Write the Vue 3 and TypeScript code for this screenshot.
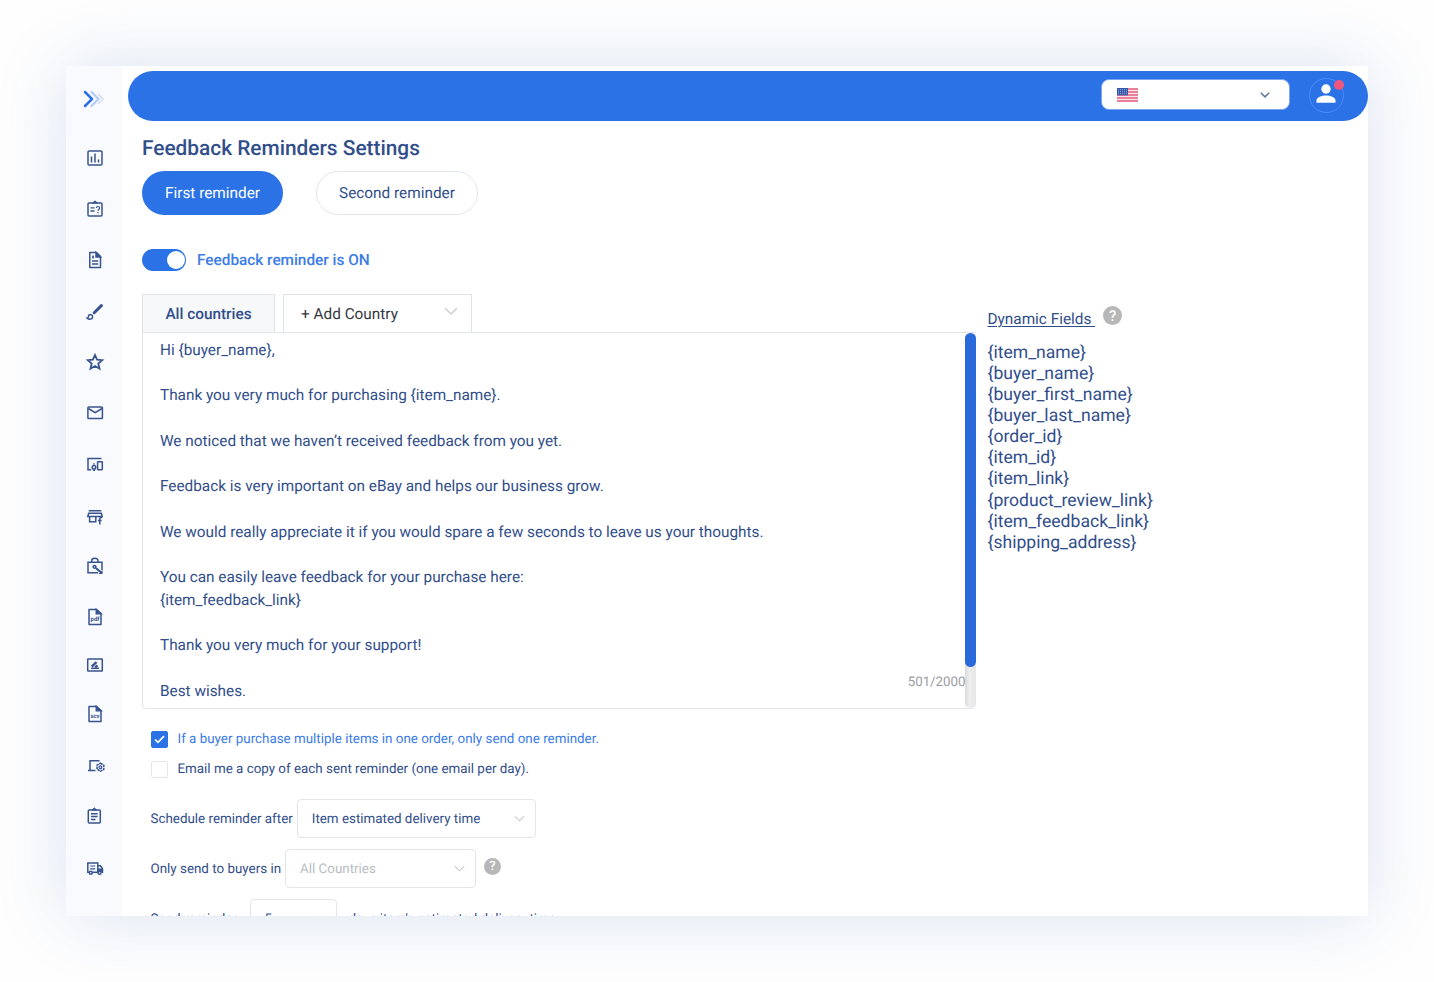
<script setup lang="ts">
import { computed, ref } from 'vue'

const icons = [
  'chart', 'quiz', 'doc', 'brush', 'star', 'mail', 'devices', 'store', 'bag',
  'pdf', 'sign', 'csv', 'laptop', 'tasks', 'truck',
]
const fields = [
  '{item_name}', '{buyer_name}', '{buyer_first_name}', '{buyer_last_name}', '{order_id}',
  '{item_id}', '{item_link}', '{product_review_link}', '{item_feedback_link}', '{shipping_address}',
]
const message = ref(`Hi {buyer_name},

Thank you very much for purchasing {item_name}.

We noticed that we haven’t received feedback from you yet.

Feedback is very important on eBay and helps our business grow.

We would really appreciate it if you would spare a few seconds to leave us your thoughts.

You can easily leave feedback for your purchase here:
{item_feedback_link}

Thank you very much for your support!

Best wishes.`)
const lines = computed(() => message.value.split('\n'))
</script>

<template>
  <div class="stage">
    <div class="window">
      <aside class="sidebar">
        <svg class="expand" viewBox="0 0 22 18" fill="none" stroke-linecap="round" stroke-linejoin="round">
          <path d="M15.500 4.500 20 9l-4.500 4.500" stroke="#d3def2" stroke-width="1.600" />
          <path d="M8.500 2l7 7-7 7" stroke="#b5ccf5" stroke-width="2.200" />
          <path d="M2 2l7 7-7 7" stroke="#2b70e4" stroke-width="2.500" />
        </svg>
        <nav class="nav">
          <a v-for="name in icons" :key="name" class="nav-item">
            <svg class="ico" :class="name" viewBox="0 0 18 18" fill="none" stroke="currentColor" stroke-width="1.500">
              <template v-if="name === 'chart'">
                <rect x="2" y="2" width="14" height="14" rx="1" />
                <path d="M5.500 7.500v6M9 4.500v9M12.500 10.500v3" />
              </template>
              <template v-else-if="name === 'quiz'">
                <rect x="2" y="3" width="14" height="13" rx="1" />
                <path d="M6.500 3 9 .9 11.500 3z" fill="currentColor" stroke-width="1" />
                <path d="M4.500 7.800h4M4.500 11h4" stroke-width="1.300" />
                <path d="M10.400 8c0-2 3.200-2 3.200 0 0 1.300-1.600 1.200-1.600 2.700M12 12v1.200" stroke-width="1.200" />
              </template>
              <template v-else-if="name === 'doc'">
                <path d="M3.800 1.500h6.700l4 4v11H3.800z" stroke-linejoin="round" />
                <path d="M10 1.500v4.500h4.500z" fill="currentColor" />
                <path d="M6 10h6.200M6 13h6.200M6 6.200h2M7 4.600v3" stroke-width="1.300" />
              </template>
              <template v-else-if="name === 'brush'">
                <path d="M8.200 9.700 15.400 2.600" stroke-width="3" stroke-linecap="round" />
                <path d="M1.200 15.200c1.300 0 1.100-1 1.300-2.100.4-2.200 4.200-1.900 4.200.6 0 2.600-3.700 3.300-5.500 1.500z" />
              </template>
              <path v-else-if="name === 'star'" d="M9 2l2.100 4.700 5.100.5-3.900 3.400 1.200 5.100L9 13l-4.500 2.700 1.200-5.100-3.900-3.400 5.100-.5z" stroke-width="1.800" />
              <template v-else-if="name === 'mail'">
                <rect x="1.900" y="3" width="14.500" height="11.500" rx=".8" />
                <path d="M2.400 4.500l6.800 4.200 6.800-4.200" />
              </template>
              <template v-else-if="name === 'devices'">
                <path d="M15.500 3.500H2v11.200h3.200" />
                <rect x="11.600" y="6.700" width="4.700" height="8" rx=".4" />
                <circle cx="8" cy="12.300" r="1.800" />
                <path d="M7 9h2M7 15.300h2" stroke-width="1.200" />
              </template>
              <template v-else-if="name === 'store'">
                <path d="M2.700 2.700h12.600M2.700 5.300h12.600l.9 3.200H1.800zM3.600 8.500v5.200h6.200V8.500" />
                <path d="M16 9.500c-1.800-.4-2.200.3-2.200 1.500v5.500M12 12.500h3.600" stroke-width="1.500" />
              </template>
              <template v-else-if="name === 'bag'">
                <path d="M16 13V5.200H2v10.600h10M5.700 5V3.700C5.700.4 12 .4 12 3.700V5" />
                <circle cx="8.500" cy="9.800" r="1.400" />
                <path d="M9.800 11l6 5" stroke-width="2.200" />
                <path d="M16.500 13v4h-4z" fill="currentColor" stroke="none" />
              </template>
              <template v-else-if="name === 'pdf' || name === 'csv'">
                <path d="M3 1.500h7.500l4.500 4v11H3z" stroke-linejoin="round" />
                <path d="M10.300 1.500v4.200H15z" fill="currentColor" />
                <text x="9" y="13" text-anchor="middle" class="glyph">{{ name === 'pdf' ? 'pdf' : 'scv' }}</text>
              </template>
              <template v-else-if="name === 'sign'">
                <rect x="1.700" y="3" width="14.600" height="12" rx=".6" />
                <path d="M5 12.300h8" />
                <path d="M5.800 10.700 10.500 6M9.200 11.500l2.200-2.200" stroke-width="2.400" />
              </template>
              <template v-else-if="name === 'laptop'">
                <path d="M13.500 3.800H4v9.700M2 13.600h7.500" />
                <path d="M14.400 6.200l3.400 2v4l-3.400 2-3.400-2v-4z" stroke-width="1.500" stroke-dasharray="2.600 .6" />
                <circle cx="14.400" cy="10.200" r="1.400" stroke-width="1.200" />
              </template>
              <template v-else-if="name === 'tasks'">
                <rect x="2.300" y="3" width="12" height="13" rx="1" />
                <path d="M6 3 8.300.9 10.600 3z" fill="currentColor" stroke-width="1" />
                <path d="M5 6.800h6.600M5 9.600h6.600M5 12.400h4.500" />
              </template>
              <template v-else>
                <path d="M3 13.200H1.800V4h10v9.200H6.500M11.800 6.800h2.500l2.200 3v3.400h-.7" />
                <path d="M12 10h4.500v2.500H12z" fill="currentColor" stroke-width="1" />
                <path d="M4.200 7h5M4.200 9.800h5" stroke-width="1.200" />
                <circle cx="4.800" cy="13.800" r="1.500" />
                <circle cx="13.600" cy="13.800" r="1.500" />
              </template>
            </svg>
          </a>
        </nav>
      </aside>

      <main class="main">
        <header class="topbar">
          <div class="locale">
            <svg class="flag" viewBox="0 0 21 14">
              <rect width="21" height="14" fill="#fbe3ea" />
              <path d="M0 1h21M0 4h21M0 7h21M0 10h21M0 13h21" stroke="#e55f83" stroke-width="1.500" />
              <rect width="11" height="7.300" fill="#3558a8" />
              <path d="M1 1.700h10M1 3.700h10M1 5.700h10" stroke="#a9bbe0" stroke-width=".8" stroke-dasharray="1 1" />
            </svg>
            <svg class="chev-dark" viewBox="0 0 10 6"><path d="M.8.8 5 4.900 9.200.8" /></svg>
          </div>
          <div class="avatar">
            <svg viewBox="0 0 20 20"><circle cx="10" cy="5" r="4.700" /><path d="M.5 18.700v-2.200C.5 13 6 11.500 10 11.500s9.500 1.500 9.500 5v2.200z" /></svg>
            <span class="dot"></span>
          </div>
        </header>

        <section class="content">
          <h1 class="title">Feedback Reminders Settings</h1>
          <div class="pills">
            <button class="pill active">First reminder</button>
            <button class="pill">Second reminder</button>
          </div>
          <div class="toggle-row">
            <span class="switch"><span class="knob"></span></span>
            <span class="toggle-label">Feedback reminder is ON</span>
          </div>

          <div class="columns">
            <div class="editor">
              <div class="tabs">
                <div class="tab">All countries</div>
                <div class="add"><span class="add-label">+ Add Country</span><svg class="chev" viewBox="0 0 14 8"><path d="M1 1l6 6 6-6" /></svg></div>
              </div>
              <div class="box">
                <div class="message"><p v-for="(line, i) in lines" :key="i" class="line">{{ line }}</p></div>
                <span class="count">501/2000</span>
                <div class="track"><div class="thumb"></div></div>
              </div>
            </div>
            <div class="dynamic">
              <div class="dyn-head"><span class="dyn-title">Dynamic Fields&nbsp;</span><span class="help big">?</span></div>
              <ul class="fields"><li v-for="f in fields" :key="f"><span>{{ f }}</span></li></ul>
            </div>
          </div>

          <div class="options">
            <label class="check on">
              <span class="cb"><svg viewBox="0 0 11 9"><path d="M1 4.500 4 7.400 10 1.200" /></svg></span>
              <span class="label">If a buyer purchase multiple items in one order, only send one reminder.</span>
            </label>
            <label class="check"><span class="cb"></span><span class="label">Email me a copy of each sent reminder (one email per day).</span></label>
            <div class="row first">
              <span class="label">Schedule reminder after</span>
              <div class="select schedule"><span class="label">Item estimated delivery time</span><svg class="chev" viewBox="0 0 14 8"><path d="M1 1l6 6 6-6" /></svg></div>
            </div>
            <div class="row">
              <span class="label">Only send to buyers in</span>
              <div class="select countries"><span class="label">All Countries</span><svg class="chev" viewBox="0 0 14 8"><path d="M1 1l6 6 6-6" /></svg></div>
              <span class="help">?</span>
            </div>
            <div class="row">
              <span class="label send">Send reminder</span>
              <div class="select days"><span class="label">5</span><svg class="chev" viewBox="0 0 14 8"><path d="M1 1l6 6 6-6" /></svg></div>
              <span class="label after">days item's estimated delivery time</span>
            </div>
          </div>
        </section>
      </main>
    </div>
  </div>
</template>

<style>
body { margin: 0; background: #fff; overflow: hidden; }
</style>

<style scoped>
* { box-sizing: border-box; }
.stage { width: 1434px; height: 982px; padding: 66px; background: #fefefe; overflow: hidden; font-family: Roboto, "Liberation Sans", sans-serif; color: #314e8b; text-rendering: geometricPrecision; }
.window { display: flex; width: 1302px; height: 850px; background: #fff; overflow: hidden; box-shadow: 0 0 65px rgba(50, 95, 180, .18); }
.sidebar { width: 56px; flex: none; background: #f8fafd; }
.expand { display: block; width: 22px; height: 18px; margin: 24px 0 0 17px; }
.nav { display: grid; margin-top: 25px; grid-template-rows: 50px 52px 49px 56px 44px 57px 46px 59px 40px 61px 36px 62px 42px 58px 46px; }
.nav-item { display: flex; align-items: center; justify-content: center; padding-left: 1px; color: #38548f; }
.ico { width: 18px; height: 18px; overflow: visible; }
.glyph { font: 700 6px Roboto, sans-serif; fill: currentColor; stroke: none; }
.main { flex: 1; min-width: 0; padding: 4.500px 0 0 5.500px; }
.topbar { display: flex; align-items: flex-start; justify-content: flex-end; height: 50.500px; border-radius: 25px; background: #2b72e6; padding: 7.500px 24px 0 0; }
.locale { display: flex; align-items: center; justify-content: space-between; width: 189px; height: 31px; margin-top: 1px; padding: 1px 19px 0 15px; background: #fff; border: 1px solid #7ba7f2; border-radius: 8px; }
.flag { width: 21px; height: 14px; }
.chev-dark { width: 10px; height: 6px; fill: none; stroke: #5d789f; stroke-width: 1.500; }
.avatar { position: relative; display: flex; justify-content: center; width: 35px; height: 35px; margin-left: 19px; padding: 5px 1px 0 0; border: 1px solid #4b8bff; border-radius: 50%; }
.avatar svg { width: 20px; height: 20px; fill: #fff; }
.dot { position: absolute; top: 1px; right: -1px; width: 10px; height: 10px; border-radius: 50%; background: #f0567d; }
.content { padding-left: 14.500px; }
.title { margin: 14px 0 0; font-size: 20.850px; line-height: 29px; height: 26px; font-weight: 500; white-space: nowrap; }
.pills { display: flex; gap: 33px; margin-top: 10px; }
.pill { width: 141px; height: 44px; padding: 0 0 1px; border: 0; border-radius: 22px; background: #fff; font: 400 15.350px Roboto, sans-serif; color: #314e8b; text-rendering: inherit; }
.pill:not(.active) { width: 162px; border: 1px solid #e2e6eb; }
.pill.active { background: #2b72e6; color: #fff; }
.toggle-row { display: flex; align-items: center; height: 22px; margin-top: 34px; }
.switch { display: flex; justify-content: flex-end; align-items: center; width: 44px; height: 22px; padding-right: 1.500px; border-radius: 11px; background: #2b72e6; }
.knob { width: 18px; height: 18px; border-radius: 50%; background: #fff; }
.toggle-label { margin-left: 11px; padding-bottom: 1px; font-size: 15.350px; font-weight: 500; color: #3b7ce6; }
.columns { display: flex; align-items: flex-start; margin-top: 23px; }
.editor { width: 834px; }
.tabs { display: flex; gap: 8px; height: 38px; }
.tab { display: flex; align-items: center; justify-content: center; width: 133px; height: 39px; border: 1px solid #dfe3e7; border-bottom: 0; background: #f6f8fa; font-size: 15.350px; font-weight: 500; }
.add { display: flex; align-items: center; justify-content: space-between; width: 189px; padding: 0 13px 0 17px; border: 1px solid #dfe3e7; border-bottom: 0; font-size: 15.350px; color: #35383f; }
.add .chev { margin-top: -5px; }
.chev { width: 14px; height: 8px; fill: none; stroke: #c6cad1; stroke-width: 1.300; }
.box { position: relative; display: flex; justify-content: space-between; height: 377px; border: 1px solid #e2e5ea; border-right: 0; border-radius: 0 0 5px 4px; }
.message { padding: 5.500px 0 0 17px; font-size: 15.330px; line-height: 22.750px; white-space: nowrap; }
.line { margin: 0; height: 22.750px; }
.count { position: absolute; right: 10.500px; bottom: 17.500px; font-size: 13.300px; line-height: 17px; color: #9a9da3; }
.track { width: 11px; border-radius: 6px; background: linear-gradient(90deg, #d9d9d9, #eee 40%, #e6e6e6); }
.thumb { height: 334px; border-radius: 6px; background: #2a69da; }
.dynamic { margin: 11px 0 0 11.500px; }
.dyn-head { display: flex; align-items: flex-start; height: 37.700px; }
.dyn-title { margin-top: 4px; font-size: 15.350px; line-height: 20px; text-decoration: underline; text-underline-offset: 2px; }
.help { display: flex; align-items: center; justify-content: center; width: 17px; height: 17px; border-radius: 50%; background: #b7b7b7; color: #fff; font-size: 13px; font-weight: 500; margin: -5px 0 0 8px; }
.help.big { width: 19px; height: 19px; font-size: 15px; margin: 1px 0 0 8px; }
.fields { list-style: none; margin: 0; padding: 0; font-size: 17.570px; line-height: 21.130px; }
.options { padding-left: 8.500px; font-size: 13.390px; }
.label { padding-top: 1.500px; }
.check { display: flex; align-items: center; height: 18px; margin-top: 12px; white-space: nowrap; }
.check.on { margin-top: 21px; color: #3b7ce6; }
.cb { display: flex; align-items: center; justify-content: center; width: 17px; height: 17px; margin-right: 10px; border: 1px solid #e3e7ec; border-radius: 2px; }
.on .cb { background: #2b72e6; border-color: #2b72e6; }
.cb svg { width: 11px; height: 9px; fill: none; stroke: #fff; stroke-width: 1.700; }
.row { display: flex; align-items: center; height: 39px; margin-top: 11px; white-space: nowrap; }
.row.first { margin-top: 21px; }
.select { display: flex; align-items: center; justify-content: space-between; height: 39px; padding: 0 10px 0 14px; border: 1px solid #e2e5ea; border-radius: 4px; margin-left: 4px; }
.select .chev { width: 11px; height: 7px; }
.schedule { width: 239px; }
.countries { width: 191px; color: #b9bdc4; }
.send { width: 95px; }
.days { width: 87px; }
.after { margin-left: 12px; }
</style>
